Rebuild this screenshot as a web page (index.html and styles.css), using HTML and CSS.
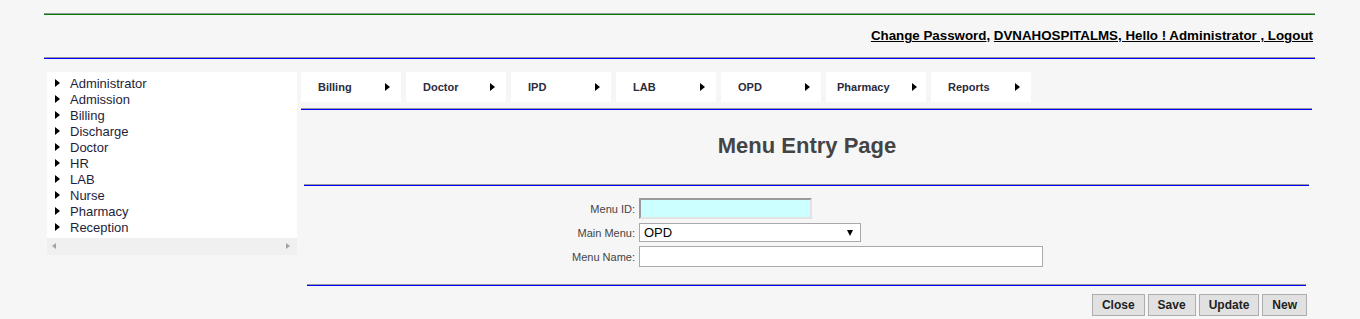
FILE: index.html
```html
<!DOCTYPE html>
<html lang="en">
<head>
    <meta charset="UTF-8">
    <meta name="viewport" content="width=device-width, initial-scale=1.0">
    <title>Menu Entry Page</title>
    <link rel="stylesheet" href="styles.css">
</head>
<body>
    <div class="page">
        <hr class="rule rule-green">
        <div class="userbar">
            <a href="#">Change Password</a>, <a href="#">DVNAHOSPITALMS, Hello ! Administrator , Logout</a>
        </div>
        <hr class="rule">

        <div class="main">
            <aside class="sidenav">
                <ul class="tree">
                    <li>Administrator</li>
                    <li>Admission</li>
                    <li>Billing</li>
                    <li>Discharge</li>
                    <li>Doctor</li>
                    <li>HR</li>
                    <li>LAB</li>
                    <li>Nurse</li>
                    <li>Pharmacy</li>
                    <li>Reception</li>
                </ul>
                <div class="hscroll">
                    <span class="sarrow sarrow-left"></span>
                    <span class="sarrow sarrow-right"></span>
                </div>
            </aside>

            <section class="content">
                <nav class="topmenu">
                    <a class="tab" href="#"><span class="tab-label">Billing</span><span class="tri"></span></a>
                    <a class="tab" href="#"><span class="tab-label">Doctor</span><span class="tri"></span></a>
                    <a class="tab" href="#"><span class="tab-label">IPD</span><span class="tri"></span></a>
                    <a class="tab" href="#"><span class="tab-label">LAB</span><span class="tri"></span></a>
                    <a class="tab" href="#"><span class="tab-label">OPD</span><span class="tri"></span></a>
                    <a class="tab tab-long" href="#"><span class="tab-label">Pharmacy</span><span class="tri"></span></a>
                    <a class="tab" href="#"><span class="tab-label">Reports</span><span class="tri"></span></a>
                </nav>
                <hr class="rule rule-menu">

                <h1 class="page-title">Menu Entry Page</h1>
                <hr class="rule rule-title">

                <form class="entry-form">
                    <label for="menuId">Menu ID:</label>
                    <input type="text" id="menuId" class="field field-id">

                    <label for="mainMenu">Main Menu:</label>
                    <div class="select-wrap">
                        <select id="mainMenu" class="field field-select">
                            <option>OPD</option>
                            <option>IPD</option>
                            <option>LAB</option>
                        </select>
                    </div>

                    <label for="menuName">Menu Name:</label>
                    <input type="text" id="menuName" class="field field-name">
                </form>
                <hr class="rule rule-form">

                <div class="actions">
                    <button type="button">Close</button>
                    <button type="button">Save</button>
                    <button type="button">Update</button>
                    <button type="button">New</button>
                </div>
            </section>
        </div>
    </div>
</body>
</html>
```

FILE: styles.css
```css
body {
    margin: 0;
    background-color: #f6f6f6;
    font-family: "Liberation Sans", Arial, sans-serif;
    color: #222;
}

.page {
    width: 1271px;
    margin: 0 0 0 44px;
    padding-top: 13px;
}

.rule {
    height: 0;
    margin: 0;
    border: none;
    border-top: 1px solid #999;
    border-bottom: 1px solid #0000ff;
}

.rule-green {
    border-bottom-color: #008000;
}

.userbar {
    padding: 13px 2px 13px 0;
    line-height: 16px;
    font-size: 13.33px;
    font-weight: bold;
    text-align: right;
    color: #000;
}

.userbar a {
    color: #000;
}

.main {
    display: flex;
    align-items: flex-start;
    margin-top: 13px;
}

.sidenav {
    width: 250px;
    margin-left: 3px;
    background-color: #fff;
}

.tree {
    list-style: none;
    margin: 0;
    padding: 4px 0 0 0;
}

.tree li {
    position: relative;
    padding-left: 23px;
    line-height: 16px;
    font-size: 13px;
    color: #1e1e3a;
}

.tree li::before {
    content: "";
    position: absolute;
    left: 8px;
    top: 3px;
    border-left: 5px solid #000;
    border-top: 4.5px solid transparent;
    border-bottom: 4.5px solid transparent;
}

.hscroll {
    position: relative;
    height: 17px;
    margin-top: 2px;
    background-color: #f0f0f0;
}

.sarrow {
    position: absolute;
    top: 5px;
    border-top: 3.5px solid transparent;
    border-bottom: 3.5px solid transparent;
}

.sarrow-left {
    left: 5px;
    border-right: 4px solid #a3a3a3;
}

.sarrow-right {
    right: 7px;
    border-left: 4px solid #a3a3a3;
}

.content {
    width: 1012px;
    margin-left: 4px;
}

.topmenu {
    display: flex;
    gap: 5px;
}

.tab {
    display: flex;
    align-items: center;
    width: 100px;
    height: 30px;
    background-color: #fff;
    text-decoration: none;
    font-size: 11px;
    font-weight: bold;
    color: #2b2b3b;
}

.tab-label {
    box-sizing: border-box;
    width: 84px;
    padding-left: 17px;
}

.tab-long .tab-label {
    width: 86px;
    padding-left: 11px;
}

.tri {
    border-left: 5px solid #000;
    border-top: 4.5px solid transparent;
    border-bottom: 4.5px solid transparent;
}

.rule-menu {
    margin: 6px 1px 0 0;
}

.page-title {
    margin: 23px 0 25px;
    line-height: 26px;
    font-size: 22px;
    font-weight: bold;
    text-align: center;
    color: #444;
}

.rule-title {
    margin: 0 4px 0 3px;
}

.entry-form {
    display: grid;
    grid-template-columns: 334px auto;
    column-gap: 4px;
    row-gap: 4px;
    align-items: center;
    margin-top: 12px;
}

.entry-form label {
    text-align: right;
    font-size: 11px;
    color: #444;
}

.field {
    box-sizing: border-box;
    font-family: "Liberation Sans", Arial, sans-serif;
    font-size: 13px;
    color: #000;
}

.field-id {
    width: 173px;
    height: 21px;
    background-color: #ccffff;
    border: 2px solid;
    border-color: #9a9a9a #e3e3e3 #e3e3e3 #9a9a9a;
}

.select-wrap {
    position: relative;
    width: 222px;
}

.select-wrap::after {
    content: "";
    position: absolute;
    right: 8px;
    top: 7px;
    border-top: 6px solid #000;
    border-left: 3.5px solid transparent;
    border-right: 3.5px solid transparent;
    pointer-events: none;
}

.field-select {
    display: block;
    width: 222px;
    height: 19px;
    padding: 0 0 0 4px;
    border: 1px solid #a9a9a9;
    border-radius: 0;
    background-color: #fff;
    appearance: none;
    -webkit-appearance: none;
}

.field-name {
    width: 404px;
    height: 21px;
    background-color: #fff;
    border: 1px solid #a9a9a9;
}

.rule-form {
    margin: 17px 7px 0 6px;
}

.actions {
    display: flex;
    justify-content: flex-end;
    gap: 3px;
    margin: 8px 6px 0 0;
}

.actions button {
    height: 22px;
    padding: 0 9px;
    background-color: #e1e1e1;
    border: 1px solid #adadad;
    font-family: "Liberation Sans", Arial, sans-serif;
    font-size: 12px;
    font-weight: bold;
    color: #222;
    cursor: pointer;
}
```
